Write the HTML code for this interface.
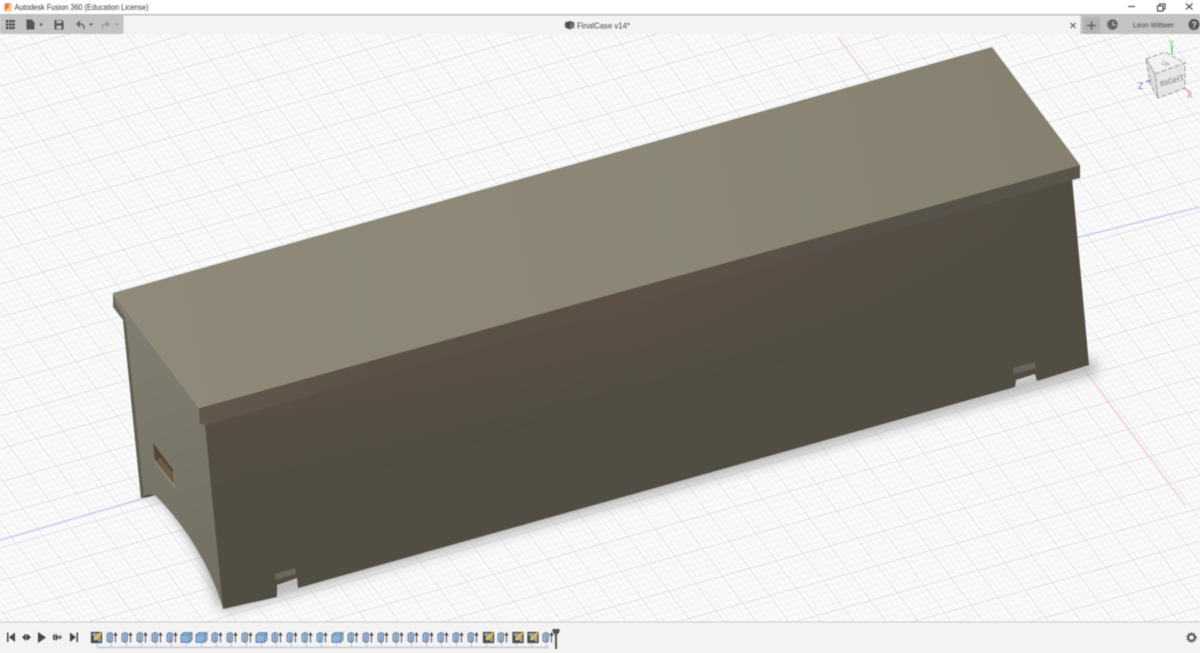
<!DOCTYPE html>
<html><head><meta charset="utf-8"><style>
html,body{margin:0;padding:0;width:1200px;height:653px;overflow:hidden;background:#fafafa}
svg{display:block;position:absolute;left:0;top:0;filter:blur(.4px)}
text{font-family:"Liberation Sans",sans-serif}
</style></head><body>
<svg width="1200" height="653" viewBox="0 0 1200 653" xmlns="http://www.w3.org/2000/svg">
<defs>
<pattern id="grid" width="100" height="100" patternUnits="userSpaceOnUse" patternTransform="matrix(.269 -.0754 .202 .273 15.2 15.800)">
<rect width="100" height="100" fill="#fbfbfb"/>
<path d="M20 0V100M40 0V100M60 0V100M80 0V100M0 20H100M0 40H100M0 60H100M0 80H100" stroke="#eeeeee" stroke-width="2.4" fill="none"/>
<path d="M0 0V100M0 0H100" stroke="#d6d6d6" stroke-width="4.5" fill="none"/>
</pattern>
<linearGradient id="top" gradientUnits="userSpaceOnUse" x1="150" y1="300" x2="1050" y2="120"><stop offset="0" stop-color="#8e8979"/><stop offset=".55" stop-color="#8b8676"/><stop offset="1" stop-color="#858070"/></linearGradient>
<linearGradient id="side" gradientUnits="userSpaceOnUse" x1="125" y1="320" x2="210" y2="560"><stop offset="0" stop-color="#817d71"/><stop offset="1" stop-color="#747064"/></linearGradient>
<linearGradient id="slab" gradientUnits="userSpaceOnUse" x1="200" y1="415" x2="1080" y2="170"><stop offset="0" stop-color="#62574c"/><stop offset=".25" stop-color="#5b5046"/><stop offset=".55" stop-color="#5d5047"/><stop offset=".8" stop-color="#57524a"/><stop offset="1" stop-color="#5a564b"/></linearGradient>
<linearGradient id="tint" gradientUnits="userSpaceOnUse" x1="640" y1="290" x2="668" y2="395"><stop offset="0" stop-color="#5d5047"/><stop offset="1" stop-color="#5d5047" stop-opacity="0"/></linearGradient>
<linearGradient id="maskg" gradientUnits="userSpaceOnUse" x1="205" y1="420" x2="1075" y2="180"><stop offset="0" stop-color="#999"/><stop offset=".5" stop-color="#fff"/><stop offset=".8" stop-color="#666"/><stop offset="1" stop-color="#1a1a1a"/></linearGradient>
<mask id="m" maskUnits="userSpaceOnUse" x="0" y="0" width="1200" height="653"><rect width="1200" height="653" fill="url(#maskg)"/></mask>
<filter id="b1" x="-20%" y="-20%" width="140%" height="140%"><feGaussianBlur stdDeviation="6"/></filter>
<g id="ex">
<path d="M-4.5 -3.5 L-1.5 -5 L1 -4 L1 3.5 L-1.5 5 L-4.5 3.5Z" fill="#9dbbdb" stroke="#5a6d82" stroke-width=".8"/>
<path d="M-1.5 -3.5V5" stroke="#5a6d82" stroke-width=".6"/>
<path d="M4 5V-2.5M2.7 -2.3L4 -4.6L5.3 -2.3Z" stroke="#444" stroke-width=".9" fill="#444"/>
</g>
<g id="bx">
<path d="M-5.5 -2.5L-3 -4.8H5.5V2.5L3 4.8H-5.5Z" fill="#8db2da" stroke="#56708c" stroke-width=".8"/>
<path d="M-5.5 -2.5H3V4.8M3 -2.5L5.5 -4.8" stroke="#56708c" stroke-width=".6" fill="none"/>
</g>
<g id="sk">
<rect x="-5" y="-5" width="10" height="10" fill="#9aa6b3" stroke="#333" stroke-width="1.1"/>
<path d="M-3.5 3.6L4.8 -4.8" stroke="#f3c521" stroke-width="2"/>
<path d="M-3.5 -2V3.5H2" stroke="#222" stroke-width="1" fill="none"/>
</g>
</defs>

<!-- viewport grid -->
<rect width="1200" height="653" fill="url(#grid)"/>
<path d="M838 37L1185 505" stroke="#f0bcbc" stroke-width="1"/>
<path d="M0 540L155 495M1075 238L1200 207" stroke="#b4b9ee" stroke-width="1"/>

<!-- shadow -->
<g filter="url(#b1)">
<path d="M138 498L160 496C190 535 210 565 225 612L300 592L1100 372L1092 358L230 590L205 520L160 488Z" fill="#9a9a9a" opacity=".7"/>
<path d="M148 496L165 500C190 530 208 565 218 606L226 604L200 520L160 488Z" fill="#808080" opacity=".7"/>
</g>

<!-- left end panel incl. slab side -->
<path d="M113 293L199 408L206 424L223 608C210 565 185 525 155 495C151 494 146 494 141 498L123 320L113 307Z" fill="url(#side)"/>
<path d="M123 320L141 498L144 497L126 322Z" fill="#625e53"/>
<path d="M113 293L113 307L123 320L127 320L116 304Z" fill="#6a665a"/>
<path d="M141 498C146 494 151 494 155 495L148 497Z" fill="#4d493f"/>
<!-- front panel -->
<path d="M205 424L1072 178L1089 365L1037 381L1035 374L1016 380L1015 387L298 588L297 578L277 585L277 597L223 609Z" fill="#514d43"/>
<path d="M205 424L1072 178L1089 365L1037 381L1035 374L1016 380L1015 387L298 588L297 578L277 585L277 597L223 609Z" fill="url(#tint)" mask="url(#m)"/>
<path d="M1013 368L1035 362L1036 368L1014 374Z" fill="#69655a"/>
<path d="M275 574L295 568L296 574L276 580Z" fill="#6a665b"/>
<!-- hole -->
<path d="M153 443L174 472L175 489L155 463Z" fill="#8b877a"/>
<path d="M153 443L173 470L174 484L155 460Z" fill="#4d4538"/>
<path d="M156 461L160 457L173 473L174 484Z" fill="#6d5c41"/>
<!-- slab -->
<path d="M199 408L1080 165L1080 178L1072 180L206 425L200 424Z" fill="url(#slab)"/>
<path d="M113 293L992 47L1080 165L199 408Z" fill="url(#top)"/>

<!-- view cube -->
<path d="M1146 59L1165 52L1185 63L1155 74Z" fill="#f1f1f1" stroke="#999" stroke-width=".9" stroke-dasharray="5 2"/>
<path d="M1155 74L1185 63L1185 88L1158 98Z" fill="#e6e6e6" stroke="#999" stroke-width=".9" stroke-dasharray="5 2"/>
<path d="M1146 59L1155 74L1158 98L1150 84Z" fill="#dcdcdc" stroke="#999" stroke-width=".9" stroke-dasharray="5 2"/>
<text x="1161" y="87" font-size="8" font-weight="bold" fill="#9a9a9a" transform="rotate(-17 1161 87)">RIGHT</text>
<text x="1161" y="64" font-size="6" fill="#8a8a8a" transform="rotate(25 1161 64)">UP</text>
<path d="M1172 54V45" stroke="#5fc468" stroke-width="1.5"/>
<text x="1168.500" y="46" font-size="8" fill="#69c86f">Y</text>
<path d="M1146 82L1151 80" stroke="#7878c8" stroke-width="1.3"/>
<text x="1138" y="89" font-size="9" fill="#7272e0">Z</text>
<path d="M1184 88L1190 92" stroke="#e88888" stroke-width="1.2"/>
<text x="1187" y="98" font-size="8" fill="#e46a6a">X</text>

<!-- title bar -->
<rect width="1200" height="14.500" fill="#fff"/>
<rect y="14" width="1200" height="1.500" fill="#bfbfbf"/>
<rect x="4" y="3" width="8" height="8.500" fill="#f7c9a0"/>
<path d="M6 10V4.500H10M6 7H9" stroke="#d9661f" stroke-width="1.400" fill="none"/>
<text x="14.500" y="10" font-size="8.600" fill="#333" textLength="134" lengthAdjust="spacingAndGlyphs">Autodesk Fusion 360 (Education License)</text>
<path d="M1128 6.500H1135" stroke="#333" stroke-width="1"/>
<path d="M1157.500 6H1163V11H1157.500ZM1159.500 6V4H1165V9H1163" stroke="#333" stroke-width="1" fill="none"/>
<path d="M1186 3.500L1192.500 9.500M1192.500 3.500L1186 9.500" stroke="#333" stroke-width="1.100"/>

<!-- toolbar -->
<rect y="15.500" width="123.500" height="18.500" fill="#c3c3c3"/>
<rect x="123.500" y="15.500" width="957" height="18.500" fill="#f3f3f3"/>
<rect x="1080.500" y="15.500" width="120" height="18.500" fill="#c3c3c3"/>
<path d="M6 20h2.400v2.400H6zM9.300 20h2.400v2.400H9.300zM12.300 20h2.400v2.400h-2.400zM6 23.400h2.400v2.400H6zM9.300 23.400h2.400v2.400H9.300zM12.300 23.400h2.400v2.400h-2.400zM6 26.700h2.400v2.400H6zM9.300 26.700h2.400v2.400H9.300zM12.300 26.700h2.400v2.400h-2.400z" fill="#454545"/>
<path d="M26.500 19.500H31.500L34.500 22.500V29.500H26.500Z" fill="#555"/>
<path d="M39 23.500H43L41 26Z" fill="#555"/>
<path d="M54.500 20H62L63.500 21.500V29.500H54.500Z" fill="#555"/>
<rect x="56.500" y="20.500" width="5" height="2.800" fill="#c3c3c3"/><rect x="56.500" y="25.500" width="5" height="3.500" fill="#c3c3c3"/>
<path d="M76 24L80 20.500V27.500Z" fill="#666"/><path d="M79 24C83 23.500 84.500 25.500 84 29" fill="none" stroke="#666" stroke-width="1.400"/>
<path d="M89 23.500H93L91 26Z" fill="#555"/>
<path d="M110 24L106 20.500V27.500Z" fill="#9a9a9a"/><path d="M107 24C103.500 23.500 102 25.500 102.500 29" fill="none" stroke="#9a9a9a" stroke-width="1.400"/>
<path d="M115 23.500H119L117 26Z" fill="#9a9a9a"/>
<path d="M565 22.500L570 21L574.500 22.500V27.500L570 29.500L565 27.500Z" fill="#4f4f4f"/>
<path d="M570 24L574.500 22.500V27.500L570 29.500Z" fill="#777"/>
<text x="577" y="28.500" font-size="8.400" fill="#444" textLength="53" lengthAdjust="spacingAndGlyphs">FinalCase v14*</text>
<path d="M1070.500 23L1075.500 28M1075.500 23L1070.500 28" stroke="#555" stroke-width="1"/>
<rect x="1083" y="17" width="17" height="17" fill="#b3b3b3"/>
<path d="M1091.500 21V30M1087 25.500H1096" stroke="#666" stroke-width="1.500"/>
<circle cx="1112.500" cy="24.500" r="5.300" fill="#666"/>
<path d="M1113 21.500V25H1116" stroke="#ccc" stroke-width="1" fill="none"/>
<text x="1133" y="27.500" font-size="7.600" fill="#444" textLength="41" lengthAdjust="spacingAndGlyphs">Leon Wittwer</text>
<circle cx="1194" cy="24.500" r="5.500" fill="#555"/>
<text x="1191.500" y="28" font-size="9" font-weight="bold" fill="#ddd">?</text>

<!-- timeline bar -->
<rect y="622" width="1200" height="31" fill="#f3f3f3"/>
<rect y="621.500" width="1200" height="1" fill="#cbcbcb"/>
<path d="M7 632.500H8.500V642H7ZM15 632.500V642L9 637.300Z" fill="#444"/>
<path d="M22 637.300L26 633.500V641ZM26.500 634.500H28L31 637.300L28 640H26.500Z" fill="#444"/>
<path d="M38 632V643L46 637.500Z" fill="#444"/>
<path d="M53 634.500H55V640H53ZM55.500 633.500V641L59.500 637.300L55.500 633.500ZM59.500 634.500L62 637.300L59.500 640Z" fill="#555"/>
<path d="M70 632.500V642L76 637.300ZM76.500 632.500H78V642H76.500Z" fill="#444"/>

<rect x="97" y="646.500" width="452" height="1.800" fill="#cdcdcd"/>
<path d="M97 642V647M111.500 643V647M126.500 643V647M141.500 643V647M156.500 643V647M171.500 643V647M186.500 643V647M201.500 643V647M216.500 643V647M231.500 643V647M246.500 643V647M261.500 643V647M276.500 643V647M291.500 643V647M306.500 643V647M321.500 643V647M336.500 643V647M351.500 643V647M366.500 643V647M381.500 643V647M396.500 643V647M411.500 643V647M426.500 643V647M441.500 643V647M456.500 643V647M471.500 643V647M486.500 643V647M501.500 643V647M516.500 643V647M531.500 643V647M546.500 643V647" stroke="#bdbdbd" stroke-width=".8"/>

<use href="#sk" x="96.500" y="637.500"/>
<use href="#ex" x="111.500" y="637.500"/><use href="#ex" x="126.500" y="637.500"/><use href="#ex" x="141.500" y="637.500"/><use href="#ex" x="156.500" y="637.500"/><use href="#ex" x="171.500" y="637.500"/>
<use href="#bx" x="186.500" y="637.500"/><use href="#bx" x="201.500" y="637.500"/>
<use href="#ex" x="216.500" y="637.500"/><use href="#ex" x="231.500" y="637.500"/><use href="#ex" x="246.500" y="637.500"/>
<use href="#bx" x="261.500" y="637.500"/>
<use href="#ex" x="276.500" y="637.500"/><use href="#ex" x="291.500" y="637.500"/><use href="#ex" x="306.500" y="637.500"/><use href="#ex" x="321.500" y="637.500"/>
<use href="#bx" x="337.500" y="637.500"/>
<use href="#ex" x="352.500" y="637.500"/><use href="#ex" x="367.500" y="637.500"/><use href="#ex" x="382.500" y="637.500"/><use href="#ex" x="397.500" y="637.500"/><use href="#ex" x="412.500" y="637.500"/><use href="#ex" x="427.500" y="637.500"/><use href="#ex" x="442.500" y="637.500"/><use href="#ex" x="457.500" y="637.500"/><use href="#ex" x="472.500" y="637.500"/>
<use href="#sk" x="488.500" y="637.500"/>
<use href="#ex" x="502.500" y="637.500"/>
<use href="#sk" x="518" y="637.500"/><use href="#sk" x="533" y="637.500"/>
<use href="#ex" x="547.500" y="637.500"/>
<path d="M552.500 629H559.500V632L557 635V649H555V635L552.500 632Z" fill="#555"/>
<circle cx="1191.500" cy="637.500" r="3.200" fill="none" stroke="#555" stroke-width="1.800"/>
<circle cx="1191.500" cy="637.500" r="4.600" fill="none" stroke="#555" stroke-width="1.200" stroke-dasharray="1.500 1.500"/>
</svg>
</body></html>
